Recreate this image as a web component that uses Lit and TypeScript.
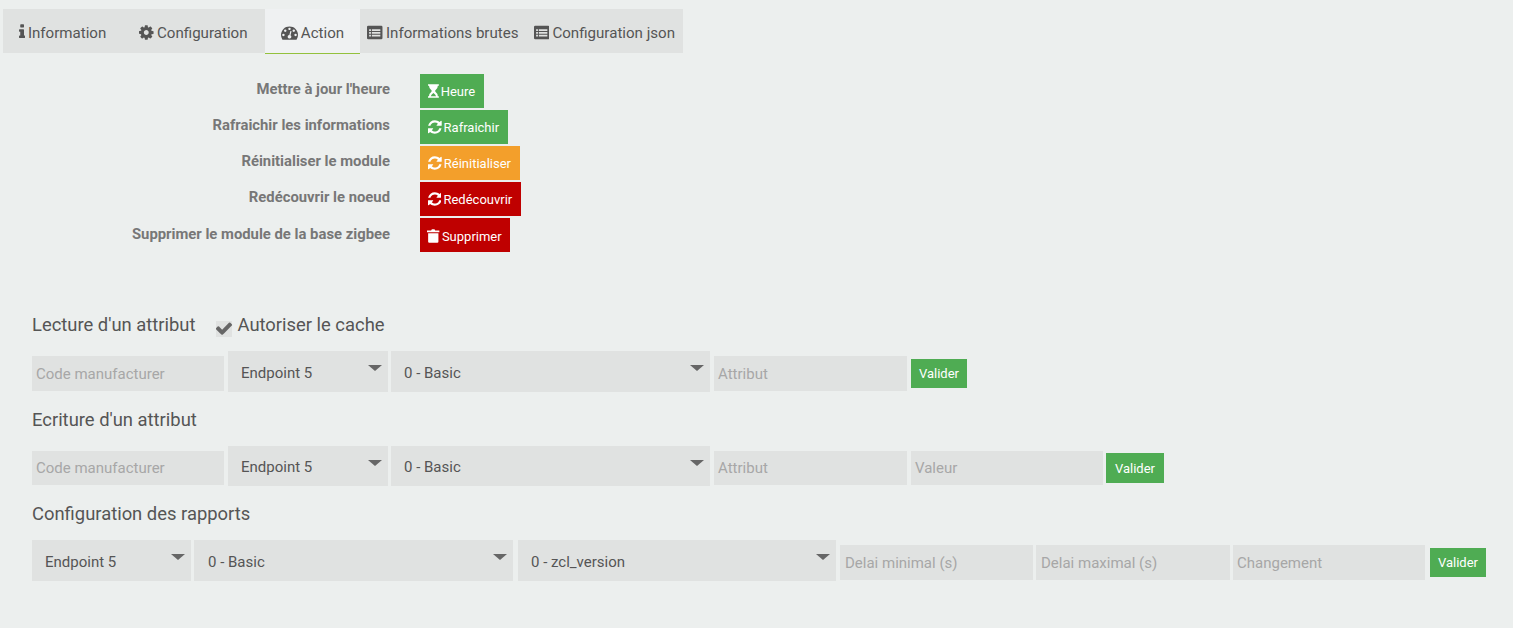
import { LitElement, html, css, svg } from "lit";
import { customElement } from "lit/decorators.js";

const P: Record<string, string> = {
  info: "M1216 1344v128q0 26-19 45t-45 19h-512q-26 0-45-19t-19-45v-128q0-26 19-45t45-19h64v-384h-64q-26 0-45-19t-19-45v-128q0-26 19-45t45-19h384q26 0 45 19t19 45v576h64q26 0 45 19t19 45zm-128-1152v192q0 26-19 45t-45 19h-256q-26 0-45-19t-19-45v-192q0-26 19-45t45-19h256q26 0 45 19t19 45z",
  cog: "M1152 896q0-106-75-181t-181-75-181 75-75 181 75 181 181 75 181-75 75-181zm512-109v222q0 12-8 23t-20 13l-185 28q-19 54-39 91 35 50 107 138 10 12 10 25t-9 23q-27 37-99 108t-94 71q-12 0-26-9l-138-108q-44 23-91 38-16 136-29 186-7 28-36 28h-222q-14 0-24.5-8.5t-11.5-21.5l-28-184q-49-16-90-37l-141 107q-10 9-25 9-14 0-25-11-126-114-165-168-7-10-7-23 0-12 8-23 15-21 51-66.5t54-70.5q-27-50-41-99l-183-27q-13-2-21-12.5t-8-23.5v-222q0-12 8-23t19-13l186-28q14-46 39-92-40-57-107-138-10-12-10-24 0-10 9-23 26-36 98.5-107.5t94.5-71.5q13 0 26 10l138 107q44-23 91-38 16-136 29-186 7-28 36-28h222q14 0 24.5 8.5t11.5 21.5l28 184q49 16 90 37l142-107q9-9 24-9 13 0 25 10 129 119 165 170 7 8 7 22 0 12-8 23-15 21-51 66.5t-54 70.5q26 50 41 98l183 28q13 2 21 12.5t8 23.5z",
  dash: "M384 1152q0-53-37.5-90.5t-90.5-37.5-90.5 37.5-37.5 90.5 37.5 90.5 90.5 37.5 90.5-37.5 37.5-90.5zm192-448q0-53-37.5-90.5t-90.5-37.5-90.5 37.5-37.5 90.5 37.5 90.5 90.5 37.5 90.5-37.5 37.5-90.5zm428 481l101-382q6-26-7.5-48.5t-38.5-29.5-48 6.5-30 39.5l-101 382q-60 5-107 43.5t-63 98.5q-20 77 20 146t117 89 146-20 89-117q16-60-6-117t-72-91zm660-33q0-53-37.5-90.5t-90.5-37.5-90.5 37.5-37.5 90.5 37.5 90.5 90.5 37.5 90.5-37.5 37.5-90.5zm-640-640q0-53-37.5-90.5t-90.5-37.5-90.5 37.5-37.5 90.5 37.5 90.5 90.5 37.5 90.5-37.5 37.5-90.5zm448 192q0-53-37.5-90.5t-90.5-37.5-90.5 37.5-37.5 90.5 37.5 90.5 90.5 37.5 90.5-37.5 37.5-90.5zm320 448q0 261-141 483-19 29-54 29h-1402q-35 0-54-29-141-221-141-483 0-182 71-348t191-286 286-191 348-71 348 71 286 191 191 286 71 348z",
  list: "M128 192h1376q128 0 128 128v1152q0 128-128 128h-1376q-128 0-128-128v-1152q0-128 128-128zM224 560v176h192v-176zM512 560v176h896v-176zM224 848v176h192v-176zM512 848v176h896v-176zM224 1136v176h192v-176zM512 1136v176h896v-176z",
  hour: "M224 128h1216v176h-112q0 320-270 520q-32 40-32 72t32 72q270 200 270 520h112v176h-1216v-176h112q0-320 270-520q32-40 32-72t-32-72q-270-200-270-520h-112zM832 1130q-230 150-300 358h600q-70-208-300-358z",
  sync: "M1639 1056q0 5-1 7-64 268-268 434.5t-478 166.5q-146 0-282.5-55t-243.5-157l-129 129q-19 19-45 19t-45-19-19-45v-448q0-26 19-45t45-19h448q26 0 45 19t19 45-19 45l-137 137q71 66 161 102t187 36q134 0 250-65t186-179q11-17 53-117 8-23 30-23h192q13 0 22.5 9.5t9.5 22.5zm25-800v448q0 26-19 45t-45 19h-448q-26 0-45-19t-19-45 19-45l138-138q-148-137-349-137-134 0-250 65t-186 179q-11 17-53 117-8 23-30 23h-199q-13 0-22.5-9.5t-9.5-22.5v-7q65-268 270-434.5t480-166.5q146 0 284 55.5t245 156.5l130-129q19-19 45-19t45 19 19 45z",
  trash: "M224 288h432l60-130q12-30 50-30h240q38 0 50 30l60 130h432q32 0 32 32v128q0 32-32 32h-1344q-32 0-32-32v-128q0-32 32-32zM320 576h1152v960q0 128-128 128h-896q-128 0-128-128z",
  check: "M1671 566q0 40-28 68l-724 724-136 136q-28 28-68 28t-68-28l-136-136-362-362q-28-28-28-68t28-68l136-136q28-28 68-28t68 28l294 295 656-657q28-28 68-28t68 28l136 136q28 28 28 68z",
};

/* s is the pixel size of the 1792-unit em; vx/vw crop the glyph horizontally. */
const icon = (name: string, s: number, vx = 0, vw = 1792) => html`<svg
  class="ic"
  width=${(vw * s) / 1792}
  height=${s}
  viewBox="${vx} 0 ${vw} 1792"
  fill="currentColor"
>${svg`<path fill-rule="evenodd" d=${P[name]}></path>`}</svg>`;

type Ctl = { k: "i" | "s" | "b"; t: string; w: number; ml: number; p?: number };

const TABS = [
  { t: "Information", i: "info", w: 119, s: 17.5, vx: 576, vw: 640 },
  { t: "Configuration", i: "cog", w: 143, s: 17, vx: 128, vw: 1536 },
  { t: "Action", i: "dash", w: 95, s: 17, vx: 0, vw: 1792, on: true },
  { t: "Informations brutes", i: "list", w: 166, s: 17, vx: 0, vw: 1632 },
  { t: "Configuration json", i: "list", w: 157, s: 17, vx: 0, vw: 1632 },
];

const ACTIONS = [
  { l: "Mettre à jour l'heure", t: "Heure", i: "hour", c: "green", w: 64, s: 16, vx: 224, vw: 1216 },
  { l: "Rafraichir les informations", t: "Rafraichir", i: "sync", c: "green", w: 88, s: 16, vx: 128, vw: 1536 },
  { l: "Réinitialiser le module", t: "Réinitialiser", i: "sync", c: "orange", w: 100, s: 16, vx: 128, vw: 1536 },
  { l: "Redécouvrir le noeud", t: "Redécouvrir", i: "sync", c: "red", w: 101, s: 16, vx: 128, vw: 1536 },
  { l: "Supprimer le module de la base zigbee", t: "Supprimer", i: "trash", c: "red", w: 90, s: 16, vx: 192, vw: 1408 },
];

const ROW1: Ctl[] = [
  { k: "i", t: "Code manufacturer", w: 192, ml: 0 },
  { k: "s", t: "Endpoint 5", w: 160, ml: 4 },
  { k: "s", t: "0 - Basic", w: 319, ml: 3 },
  { k: "i", t: "Attribut", w: 193, ml: 4 },
  { k: "b", t: "Valider", w: 56, ml: 4 },
];
const ROW2: Ctl[] = [
  { k: "i", t: "Code manufacturer", w: 192, ml: 0 },
  { k: "s", t: "Endpoint 5", w: 160, ml: 4 },
  { k: "s", t: "0 - Basic", w: 319, ml: 3 },
  { k: "i", t: "Attribut", w: 193, ml: 4 },
  { k: "i", t: "Valeur", w: 192, ml: 4 },
  { k: "b", t: "Valider", w: 58, ml: 3 },
];
const ROW3: Ctl[] = [
  { k: "s", t: "Endpoint 5", w: 159, ml: 0 },
  { k: "s", t: "0 - Basic", w: 319, ml: 3, p: 14 },
  { k: "s", t: "0 - zcl_version", w: 318, ml: 5 },
  { k: "i", t: "Delai minimal (s)", w: 193, ml: 4, p: 5 },
  { k: "i", t: "Delai maximal (s)", w: 194, ml: 3, p: 5 },
  { k: "i", t: "Changement", w: 192, ml: 3 },
  { k: "b", t: "Valider", w: 56, ml: 5 },
];

@customElement("app-root")
export class AppRoot extends LitElement {
  static styles = css`
    :host {
      display: block;
      min-height: 628px;
      background: #ecefee;
      font-family: Roboto, "Liberation Sans", sans-serif;
      color: #555;
      box-sizing: border-box;
      padding: 9px 0 0 3px;
    }
    .tabs {
      display: flex;
      align-items: flex-start;
      height: 44px;
    }
    .tab {
      display: flex;
      align-items: center;
      justify-content: center;
      gap: 3px;
      height: 44px;
      font-size: 15.1px;
      color: #555;
      background: #e0e2e1;
      box-sizing: border-box;
      padding-top: 2px;
    }
    .tab span {
      position: relative;
      top: 1px;
    }
    .tab.on {
      height: 45px;
      background: #eff1f2;
      border-bottom: 1px solid #93c13c;
    }
    .ic {
      flex: none;
      display: block;
    }
    .actions {
      display: flex;
      flex-direction: column;
      gap: 2px;
      margin-top: 21px;
    }
    .arow {
      display: grid;
      grid-template-columns: 387px auto;
      column-gap: 30px;
      align-items: start;
    }
    .alabel {
      text-align: right;
      font-size: 14.83px;
      font-weight: 700;
      color: #777;
      line-height: 30px;
    }
    .arow:last-child .alabel {
      padding-top: 1px;
    }
    .abtn {
      height: 34px;
      display: flex;
      align-items: center;
      justify-content: center;
      gap: 2px;
      color: #fff;
      font-size: 13px;
      padding: 1px 1px 0 0;
      box-sizing: border-box;
    }
    .arow:last-child .abtn {
      padding-top: 2px;
    }
    .abtn .ic { margin-top: -1px; }
    .green { background: #4fac53; }
    .orange { background: #f39f2b; }
    .red { background: #bf0000; }
    .forms {
      margin: 60px 0 0 29px;
    }
    .title {
      display: flex;
      align-items: center;
      font-size: 18.4px;
      color: #555;
      line-height: 26px;
      height: 26px;
    }
    .cache {
      display: flex;
      align-items: center;
      margin-left: 21px;
      gap: 5px;
    }
    .box {
      width: 16px;
      height: 16px;
      background: #e0e2e1;
      margin-top: 8px;
      position: relative;
      color: #666;
    }
    .box svg {
      position: absolute;
      left: 0;
      top: -2px;
    }
    .row {
      display: flex;
      align-items: center;
      height: 41px;
      margin-top: 13px;
      margin-bottom: 15px;
    }
    .row.b { margin-bottom: 14px; }
    .input {
      height: 35px;
      background: #e0e2e1;
      color: #a7a7a7;
      font-size: 15px;
      display: flex;
      align-items: center;
      padding: 1px 0 0 4px;
      box-sizing: border-box;
      flex: none;
      margin-top: 3px;
    }
    .select {
      height: 41px;
      background: #e0e2e1;
      color: #555;
      font-size: 15px;
      display: flex;
      align-items: center;
      padding: 3px 0 0 13px;
      box-sizing: border-box;
      position: relative;
      flex: none;
    }
    .row.b .select {
      height: 40px;
      align-self: flex-start;
      padding-top: 2px;
    }
    .row.b .input {
      height: 34px;
      padding-top: 0;
    }
    .select::after {
      content: "";
      position: absolute;
      right: 6.5px;
      top: 14px;
      border-left: 7px solid transparent;
      border-right: 7px solid transparent;
      border-top: 6.5px solid #666;
    }
    .btn {
      height: 29px;
      display: flex;
      align-items: center;
      justify-content: center;
      color: #fff;
      font-size: 13px;
      background: #4fac53;
      flex: none;
      margin-top: 3px;
    }
    .row.b .btn {
      height: 30px;
    }
  `;

  private ctl(c: Ctl) {
    const st = `width:${c.w}px;margin-left:${c.ml}px${c.p ? `;padding-left:${c.p}px` : ""}`;
    if (c.k === "i") return html`<div class="input" style=${st}>${c.t}</div>`;
    if (c.k === "s") return html`<div class="select" style=${st}>${c.t}</div>`;
    return html`<div class="btn" style=${st}>${c.t}</div>`;
  }

  render() {
    return html`
      <div class="tabs">
        ${TABS.map(
          (t) => html`<div class="tab ${t.on ? "on" : ""}" style="width:${t.w}px">
            ${icon(t.i, t.s, t.vx, t.vw)}<span>${t.t}</span>
          </div>`
        )}
      </div>
      <div class="actions">
        ${ACTIONS.map(
          (a) => html`<div class="arow">
            <div class="alabel">${a.l}</div>
            <div class="abtn ${a.c}" style="width:${a.w}px">
              ${icon(a.i, a.s, a.vx, a.vw)}<span>${a.t}</span>
            </div>
          </div>`
        )}
      </div>
      <div class="forms">
        <div class="title">
          <span>Lecture d'un attribut</span>
          <span class="cache">
            <span class="box">${icon("check", 18.7, 128, 1536)}</span>
            <span>Autoriser le cache</span>
          </span>
        </div>
        <div class="row">${ROW1.map((c) => this.ctl(c))}</div>
        <div class="title">Ecriture d'un attribut</div>
        <div class="row b">${ROW2.map((c) => this.ctl(c))}</div>
        <div class="title">Configuration des rapports</div>
        <div class="row">${ROW3.map((c) => this.ctl(c))}</div>
      </div>
    `;
  }
}
